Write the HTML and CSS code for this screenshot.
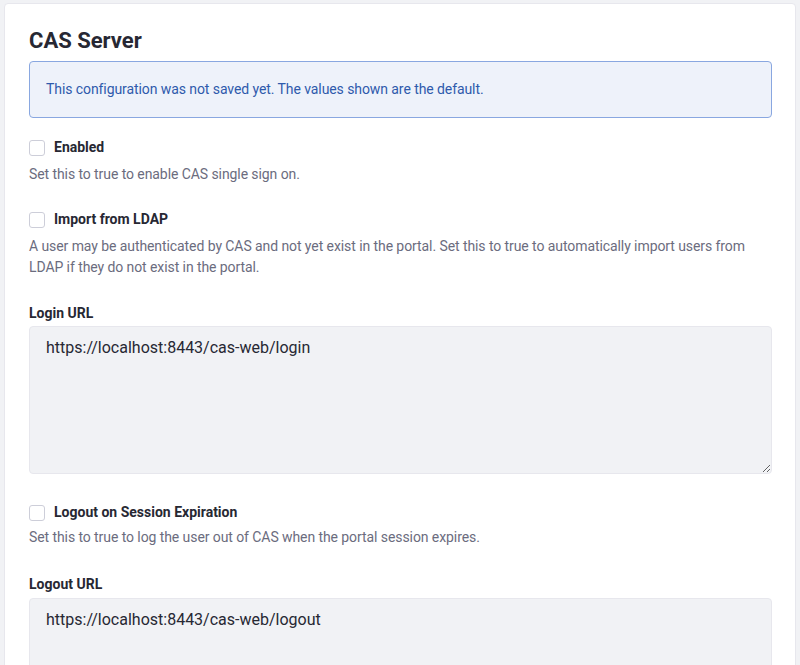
FILE: index.html
```html
<!DOCTYPE html>
<html>
<head>
<meta charset="utf-8">
<link rel="stylesheet" href="styles.css">
</head>
<body>
<div class="sheet">
  <h2 class="sheet-title">CAS Server</h2>
  <div class="alert">This configuration was not saved yet. The values shown are the default.</div>

  <div class="group">
    <label class="check"><span class="box"></span><span>Enabled</span></label>
    <div class="help">Set this to true to enable CAS single sign on.</div>
  </div>

  <div class="group group-wide">
    <label class="check"><span class="box"></span><span>Import from LDAP</span></label>
    <div class="help">A user may be authenticated by CAS and not yet exist in the portal. Set this to true to automatically import users from LDAP if they do not exist in the portal.</div>
  </div>

  <div class="group group-text">
    <label class="field-label">Login URL</label>
    <textarea class="input" readonly>https://localhost:8443/cas-web/login</textarea>
  </div>

  <div class="group group-wider">
    <label class="check"><span class="box"></span><span>Logout on Session Expiration</span></label>
    <div class="help help-tight">Set this to true to log the user out of CAS when the portal session expires.</div>
  </div>

  <div class="group group-text">
    <label class="field-label field-label-loose">Logout URL</label>
    <textarea class="input" readonly>https://localhost:8443/cas-web/logout</textarea>
  </div>
</div>
</body>
</html>
```
FILE: styles.css
```css
html, body {
  margin: 0;
  padding: 0;
  background: #f1f2f5;
  font-family: Roboto, "Liberation Sans", sans-serif;
  color: #272833;
  overflow: hidden;
}
.sheet {
  margin: 3px 4px 0 4px;
  background: #fff;
  border: 1px solid #e7e7ed;
  border-radius: 4px;
  padding: 25px 23px 40px 24px;
}
.sheet-title {
  margin: 0 0 8px 0;
  font-size: 22px;
  line-height: 24px;
  font-weight: 700;
  color: #272833;
}
.alert {
  border: 1px solid #89a7e0;
  background: #eef2fa;
  color: #2e5aac;
  border-radius: 4px;
  padding: 17px 16px;
  font-size: 14px;
  line-height: 21px;
  letter-spacing: -0.08px;
  margin-bottom: 19px;
}
.group {
  margin-bottom: 24px;
}
.group-text {
  margin-bottom: 28px;
}
.group-wide {
  margin-bottom: 25px;
}
.group-wider {
  margin-bottom: 26px;
}
.check {
  display: flex;
  align-items: center;
  gap: 9px;
  font-size: 14px;
  line-height: 21px;
  font-weight: 700;
  color: #272833;
}
.box {
  width: 14px;
  height: 14px;
  border: 1px solid #cdced9;
  border-radius: 3px;
  background: #fff;
  flex: none;
}
.help {
  margin-top: 6px;
  font-size: 14px;
  line-height: 21px;
  letter-spacing: -0.08px;
  color: #6b6c7e;
}
.help-tight {
  margin-top: 4px;
}
.field-label {
  display: block;
  font-size: 14px;
  line-height: 21px;
  font-weight: 700;
  color: #272833;
  margin-bottom: 2px;
}
.field-label-loose {
  margin-bottom: 3px;
}
.input {
  display: block;
  box-sizing: border-box;
  width: 100%;
  height: 148px;
  margin: 0;
  background: #f1f2f5;
  border: 1px solid #e7e7ed;
  border-radius: 4px;
  padding: 9px 16px;
  font-family: Roboto, "Liberation Sans", sans-serif;
  font-size: 16px;
  line-height: 24px;
  color: #272833;
  outline: none;
  resize: vertical;
}
```
